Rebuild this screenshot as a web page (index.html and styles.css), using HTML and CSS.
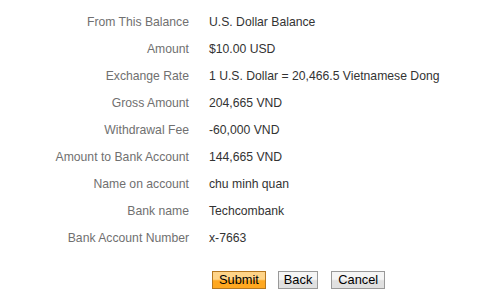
FILE: index.html
```html
<!DOCTYPE html>
<html lang="en">
<head>
    <meta charset="UTF-8">
    <meta name="viewport" content="width=device-width, initial-scale=1.0">
    <title>Review Withdrawal</title>
    <link rel="stylesheet" href="styles.css">
</head>
<body>
    <!-- Withdrawal summary -->
    <div class="ozet">
        <div class="satir"><span class="etiket">From This Balance</span><span class="deger">U.S. Dollar Balance</span></div>
        <div class="satir"><span class="etiket">Amount</span><span class="deger">$10.00 USD</span></div>
        <div class="satir"><span class="etiket">Exchange Rate</span><span class="deger">1 U.S. Dollar = 20,466.5 Vietnamese Dong</span></div>
        <div class="satir"><span class="etiket">Gross Amount</span><span class="deger">204,665 VND</span></div>
        <div class="satir"><span class="etiket">Withdrawal Fee</span><span class="deger">-60,000 VND</span></div>
        <div class="satir"><span class="etiket">Amount to Bank Account</span><span class="deger">144,665 VND</span></div>
        <div class="satir"><span class="etiket">Name on account</span><span class="deger">chu minh quan</span></div>
        <div class="satir"><span class="etiket">Bank name</span><span class="deger">Techcombank</span></div>
        <div class="satir"><span class="etiket">Bank Account Number</span><span class="deger">x-7663</span></div>
    </div>

    <!-- Buttons -->
    <div class="butonlar">
        <button class="buton birincil">Submit</button>
        <button class="buton">Back</button>
        <button class="buton genis">Cancel</button>
    </div>
</body>
</html>
```

FILE: styles.css
```css
/* General page */
body {
    font-family: 'Liberation Sans', Arial, sans-serif;
    font-size: 12.2px;
    background-color: #ffffff;
    margin: 0;
    padding: 9px 0 0 0;
}

/* Summary table */
.satir {
    display: grid;
    grid-template-columns: 189px 1fr;
    column-gap: 20px;
    line-height: 27px;
}

.etiket {
    text-align: right;
    color: #707070;
}

.deger {
    color: #333333;
}

/* Buttons row */
.butonlar {
    display: flex;
    gap: 12px;
    margin-top: 19px;
    padding-left: 212px;
}

.buton {
    font-family: 'Liberation Sans', Arial, sans-serif;
    font-size: 12.8px;
    color: #000;
    height: 18px;
    padding: 0 5px;
    line-height: 16px;
    border: 1px solid #999999;
    background: linear-gradient(to bottom, #f5f5f5 0%, #f5f5f5 45%, #e0e0e0 55%, #e0e0e0 100%);
    border-radius: 0;
    cursor: pointer;
}

.buton.birincil {
    padding: 0 6px;
    border-color: #b7781f;
    background: linear-gradient(to bottom, #ffd488 0%, #ffd488 45%, #ffa820 55%, #ffa820 100%);
}

.buton.genis {
    margin-left: 1px;
    padding: 0 6px;
}
```
